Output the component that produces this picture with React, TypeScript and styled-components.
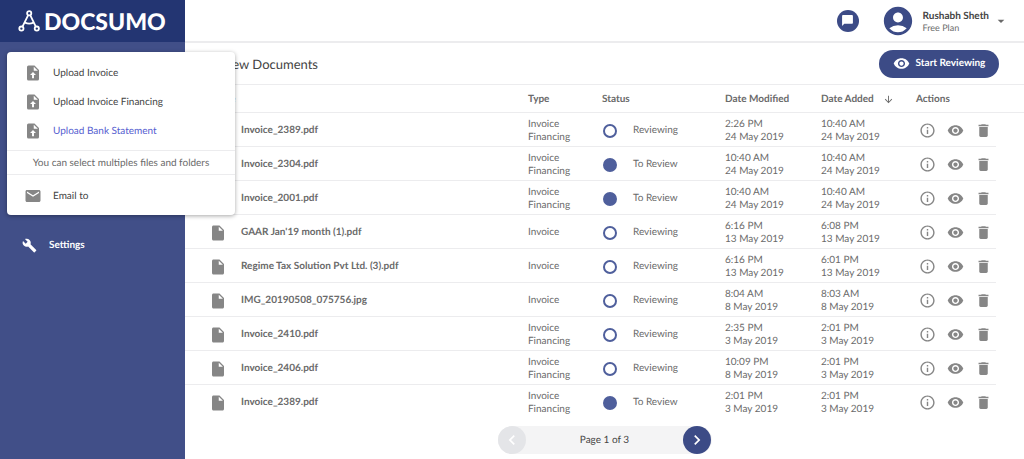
import React from "react";
import styled, { createGlobalStyle } from "styled-components";
import {
  MdAccountCircle,
  MdArrowDownward,
  MdArrowDropDown,
  MdBuild,
  MdChatBubble,
  MdChevronLeft,
  MdChevronRight,
  MdDelete,
  MdEmail,
  MdInfoOutline,
  MdInsertDriveFile,
  MdVisibility,
} from "react-icons/md";

const color = {
  navy: "#233572",
  indigo: "#414f88",
  button: "#3c4b86",
  link: "#5560d0",
  dark: "#444444",
  text: "#6a6a6a",
  icon: "#868686",
  line: "#ececee",
};

const GlobalStyle = createGlobalStyle`
  *, *::before, *::after { box-sizing: border-box; }
  body {
    margin: 0;
    background: #ffffff;
    color: ${color.text};
    font-family: Lato, "Liberation Sans", sans-serif;
    font-size: 10px;
    line-height: 13px;
    text-rendering: geometricPrecision;
  }
  button {
    border: 0;
    padding: 0;
    background: none;
    color: inherit;
    font: inherit;
    text-rendering: inherit;
    cursor: pointer;
  }
  svg { display: block; flex: none; }
`;

const Shell = styled.div`
  display: flex;
  min-height: 100vh;
`;

const Sidebar = styled.aside`
  position: relative;
  flex: none;
  width: 185px;
  background: ${color.indigo};
`;

const Brand = styled.a`
  display: flex;
  align-items: center;
  gap: 4px;
  height: 42px;
  padding-left: 18px;
  background: ${color.navy};
  color: #ffffff;
  font-size: 23px;
  font-weight: 900;
  line-height: 24px;
  text-decoration: none;
`;

const SideNav = styled.nav`
  padding-top: 189px;
`;

const SideLink = styled.a`
  display: flex;
  align-items: center;
  gap: 12px;
  height: 28px;
  padding-left: 22px;
  color: #ffffff;
  font-weight: 700;
  text-decoration: none;
`;

const Menu = styled.div`
  position: absolute;
  top: 52px;
  left: 7px;
  z-index: 2;
  width: 228px;
  border-radius: 4px;
  background: #ffffff;
  box-shadow: 0 1px 4px rgba(0, 0, 0, 0.35);
`;

const MenuGroup = styled.div`
  display: flex;
  flex-direction: column;
  gap: 1px;
  padding: 7px 0 5px;
`;

const MenuItem = styled.button<{ $active?: boolean }>`
  display: flex;
  align-items: center;
  gap: 11px;
  width: 100%;
  height: 28px;
  padding-left: 17px;
  color: ${(p) => (p.$active ? color.link : color.dark)};
  text-align: left;

  svg { color: ${color.icon}; }
`;

const MenuHint = styled.p`
  margin: 0;
  padding: 6px 0 4px;
  border: solid ${color.line};
  border-width: 1px 0;
  text-align: center;
`;

const Main = styled.main`
  flex: 1;
  min-width: 0;
`;

const TopBar = styled.header`
  display: flex;
  align-items: center;
  justify-content: flex-end;
  height: 43px;
  padding-right: 15px;
  border-bottom: 2px solid ${color.line};
`;

const ChatButton = styled.button`
  display: grid;
  place-items: center;
  width: 22px;
  height: 22px;
  margin-right: 22px;
  border-radius: 50%;
  background: ${color.button};
  color: #ffffff;
`;

const Account = styled.button`
  display: flex;
  align-items: center;
  gap: 4px;
  text-align: left;

  > svg:first-child {
    margin-right: 4px;
    color: ${color.button};
  }
`;

const AccountText = styled.span`
  display: flex;
  flex-direction: column;
  padding-top: 2px;
  font-size: 9px;
  line-height: 11px;

  strong {
    color: ${color.dark};
    font-size: 10px;
  }
`;

const TitleBar = styled.div`
  display: flex;
  align-items: center;
  justify-content: space-between;
  height: 42px;
  padding: 0 25px 0 23px;
  border-bottom: 1px solid ${color.line};
`;

const Title = styled.h1`
  margin: 0;
  color: ${color.dark};
  font-size: 13px;
  font-weight: 400;
  line-height: 18px;
`;

const ReviewButton = styled.button`
  display: flex;
  align-items: center;
  justify-content: center;
  gap: 6px;
  width: 120px;
  height: 28px;
  border-radius: 14px;
  background: ${color.button};
  color: #ffffff;
  font-weight: 700;
`;

const Table = styled.table`
  width: 100%;
  border-collapse: separate;
  border-spacing: 0;
  table-layout: fixed;
`;

const Col = styled.col<{ $width?: number }>`
  width: ${(p) => (p.$width ? `${p.$width}px` : "auto")};
`;

const HeadCell = styled.th`
  height: 28px;
  padding: 2px 0 0;
  border-bottom: 1px solid ${color.line};
  font-weight: 700;
  text-align: left;

  &:first-child { padding-left: 24px; }
`;

const SortButton = styled.button`
  display: flex;
  align-items: center;
  gap: 9px;
`;

const Cell = styled.td`
  height: 34px;
  padding: 2px 0 0;
  border-bottom: 1px solid ${color.line};
  white-space: pre-line;

  tr:last-child > & { border-bottom-color: transparent; }
`;

const IconCell = styled(Cell)`
  padding-left: 24px;
  color: ${color.icon};
`;

const NameCell = styled(Cell)`
  font-weight: 700;
`;

const EdgeCell = styled.td`
  padding: 0;
`;

const Status = styled.span`
  display: flex;
  align-items: center;
  gap: 16px;
  padding-left: 1px;
`;

const Dot = styled.span<{ $filled: boolean }>`
  width: 14px;
  height: 14px;
  border: 2px solid #4f5f9c;
  border-radius: 50%;
  background: ${(p) => (p.$filled ? "#4f5f9c" : "transparent")};
`;

const Actions = styled.div`
  display: flex;
  gap: 11px;
  padding-left: 3px;
  color: ${color.icon};
`;

const Pager = styled.nav`
  display: flex;
  align-items: center;
  justify-content: space-between;
  width: 214px;
  height: 28px;
  margin: 7px auto 4px;
  border-radius: 14px;
  background: #f4f4f5;
  color: ${color.dark};
`;

const PageButton = styled.button`
  display: grid;
  place-items: center;
  width: 28px;
  height: 28px;
  border-radius: 50%;
  background: ${color.button};
  color: #ffffff;

  &:disabled { background: #e4e5e8; color: #ffffff; }
`;

function LogoMark() {
  return (
    <svg width="22" height="22" viewBox="0 0 22 22" fill="none" stroke="#ffffff" strokeWidth="1.8" aria-hidden="true">
      <circle cx="11.2" cy="3.2" r="2.1" />
      <circle cx="3.4" cy="18.6" r="2.1" />
      <circle cx="18.8" cy="18.6" r="2.1" />
      <path d="M10.2 5.2 4.5 16.6M12.2 5.2l5.6 11.4M7 12.6c2.600 1.200 5.800 1.200 8.400 0" />
    </svg>
  );
}

function UploadFileIcon() {
  return (
    <svg width="18" height="18" viewBox="0 0 24 24" aria-hidden="true">
      <path
        fill="currentColor"
        fillRule="evenodd"
        d="M14 2H6a2 2 0 0 0-2 2v16a2 2 0 0 0 2 2h12a2 2 0 0 0 2-2V8l-6-6ZM13 3.500 18.500 9H13V3.500ZM12 10.500 16 14.500h-2.700V19h-2.600v-4.500H8l4-4Z"
      />
    </svg>
  );
}

type Doc = {
  name: string;
  type: string;
  status: "Reviewing" | "To Review";
  modified: string;
  added: string;
};

const docs: Doc[] = [
  { name: "Invoice_2389.pdf", type: "Invoice\nFinancing", status: "Reviewing", modified: "2:26 PM\n24 May 2019", added: "10:40 AM\n24 May 2019" },
  { name: "Invoice_2304.pdf", type: "Invoice\nFinancing", status: "To Review", modified: "10:40 AM\n24 May 2019", added: "10:40 AM\n24 May 2019" },
  { name: "Invoice_2001.pdf", type: "Invoice\nFinancing", status: "To Review", modified: "10:40 AM\n24 May 2019", added: "10:40 AM\n24 May 2019" },
  { name: "GAAR Jan'19 month (1).pdf", type: "Invoice", status: "Reviewing", modified: "6:16 PM\n13 May 2019", added: "6:08 PM\n13 May 2019" },
  { name: "Regime Tax Solution Pvt Ltd. (3).pdf", type: "Invoice", status: "Reviewing", modified: "6:16 PM\n13 May 2019", added: "6:01 PM\n13 May 2019" },
  { name: "IMG_20190508_075756.jpg", type: "Invoice", status: "Reviewing", modified: "8:04 AM\n8 May 2019", added: "8:03 AM\n8 May 2019" },
  { name: "Invoice_2410.pdf", type: "Invoice\nFinancing", status: "Reviewing", modified: "2:35 PM\n3 May 2019", added: "2:01 PM\n3 May 2019" },
  { name: "Invoice_2406.pdf", type: "Invoice\nFinancing", status: "Reviewing", modified: "10:09 PM\n8 May 2019", added: "2:01 PM\n3 May 2019" },
  { name: "Invoice_2389.pdf", type: "Invoice\nFinancing", status: "To Review", modified: "2:01 PM\n3 May 2019", added: "2:01 PM\n3 May 2019" },
];

function DocRow({ doc }: { doc: Doc }) {
  return (
    <tr>
      <IconCell><MdInsertDriveFile size={18} /></IconCell>
      <NameCell>{doc.name}</NameCell>
      <Cell>{doc.type}</Cell>
      <Cell>
        <Status>
          <Dot $filled={doc.status === "To Review"} />
          {doc.status}
        </Status>
      </Cell>
      <Cell>{doc.modified}</Cell>
      <Cell>{doc.added}</Cell>
      <Cell>
        <Actions>
          <button aria-label="Details"><MdInfoOutline size={17} /></button>
          <button aria-label="View"><MdVisibility size={17} /></button>
          <button aria-label="Delete"><MdDelete size={17} /></button>
        </Actions>
      </Cell>
      <EdgeCell />
    </tr>
  );
}

export default function App() {
  return (
    <>
      <GlobalStyle />
      <Shell>
        <Sidebar>
          <Brand href="#">
            <LogoMark />
            DOCSUMO
          </Brand>
          <Menu>
            <MenuGroup>
              <MenuItem><UploadFileIcon />Upload Invoice</MenuItem>
              <MenuItem><UploadFileIcon />Upload Invoice Financing</MenuItem>
              <MenuItem $active><UploadFileIcon />Upload Bank Statement</MenuItem>
            </MenuGroup>
            <MenuHint>You can select multiples files and folders</MenuHint>
            <MenuGroup>
              <MenuItem><MdEmail size={18} />Email to</MenuItem>
            </MenuGroup>
          </Menu>
          <SideNav>
            <SideLink href="#settings"><MdBuild size={15} />Settings</SideLink>
          </SideNav>
        </Sidebar>
        <Main>
          <TopBar>
            <ChatButton aria-label="Messages"><MdChatBubble size={13} /></ChatButton>
            <Account>
              <MdAccountCircle size={34} />
              <AccountText>
                <strong>Rushabh Sheth</strong>
                Free Plan
              </AccountText>
              <MdArrowDropDown size={16} />
            </Account>
          </TopBar>
          <TitleBar>
            <Title>Review Documents</Title>
            <ReviewButton><MdVisibility size={17} />Start Reviewing</ReviewButton>
          </TitleBar>
          <Table>
            <colgroup>
              <Col $width={56} />
              <Col />
              <Col $width={74} />
              <Col $width={123} />
              <Col $width={96} />
              <Col $width={95} />
              <Col $width={80} />
              <Col $width={28} />
            </colgroup>
            <thead>
              <tr>
                <HeadCell colSpan={2}>Name</HeadCell>
                <HeadCell>Type</HeadCell>
                <HeadCell>Status</HeadCell>
                <HeadCell>Date Modified</HeadCell>
                <HeadCell><SortButton>Date Added<MdArrowDownward size={11} /></SortButton></HeadCell>
                <HeadCell colSpan={2}>Actions</HeadCell>
              </tr>
            </thead>
            <tbody>
              {docs.map((doc, i) => <DocRow key={i} doc={doc} />)}
            </tbody>
          </Table>
          <Pager aria-label="Pages">
            <PageButton disabled aria-label="Previous page"><MdChevronLeft size={20} /></PageButton>
            Page 1 of 3
            <PageButton aria-label="Next page"><MdChevronRight size={20} /></PageButton>
          </Pager>
        </Main>
      </Shell>
    </>
  );
}
